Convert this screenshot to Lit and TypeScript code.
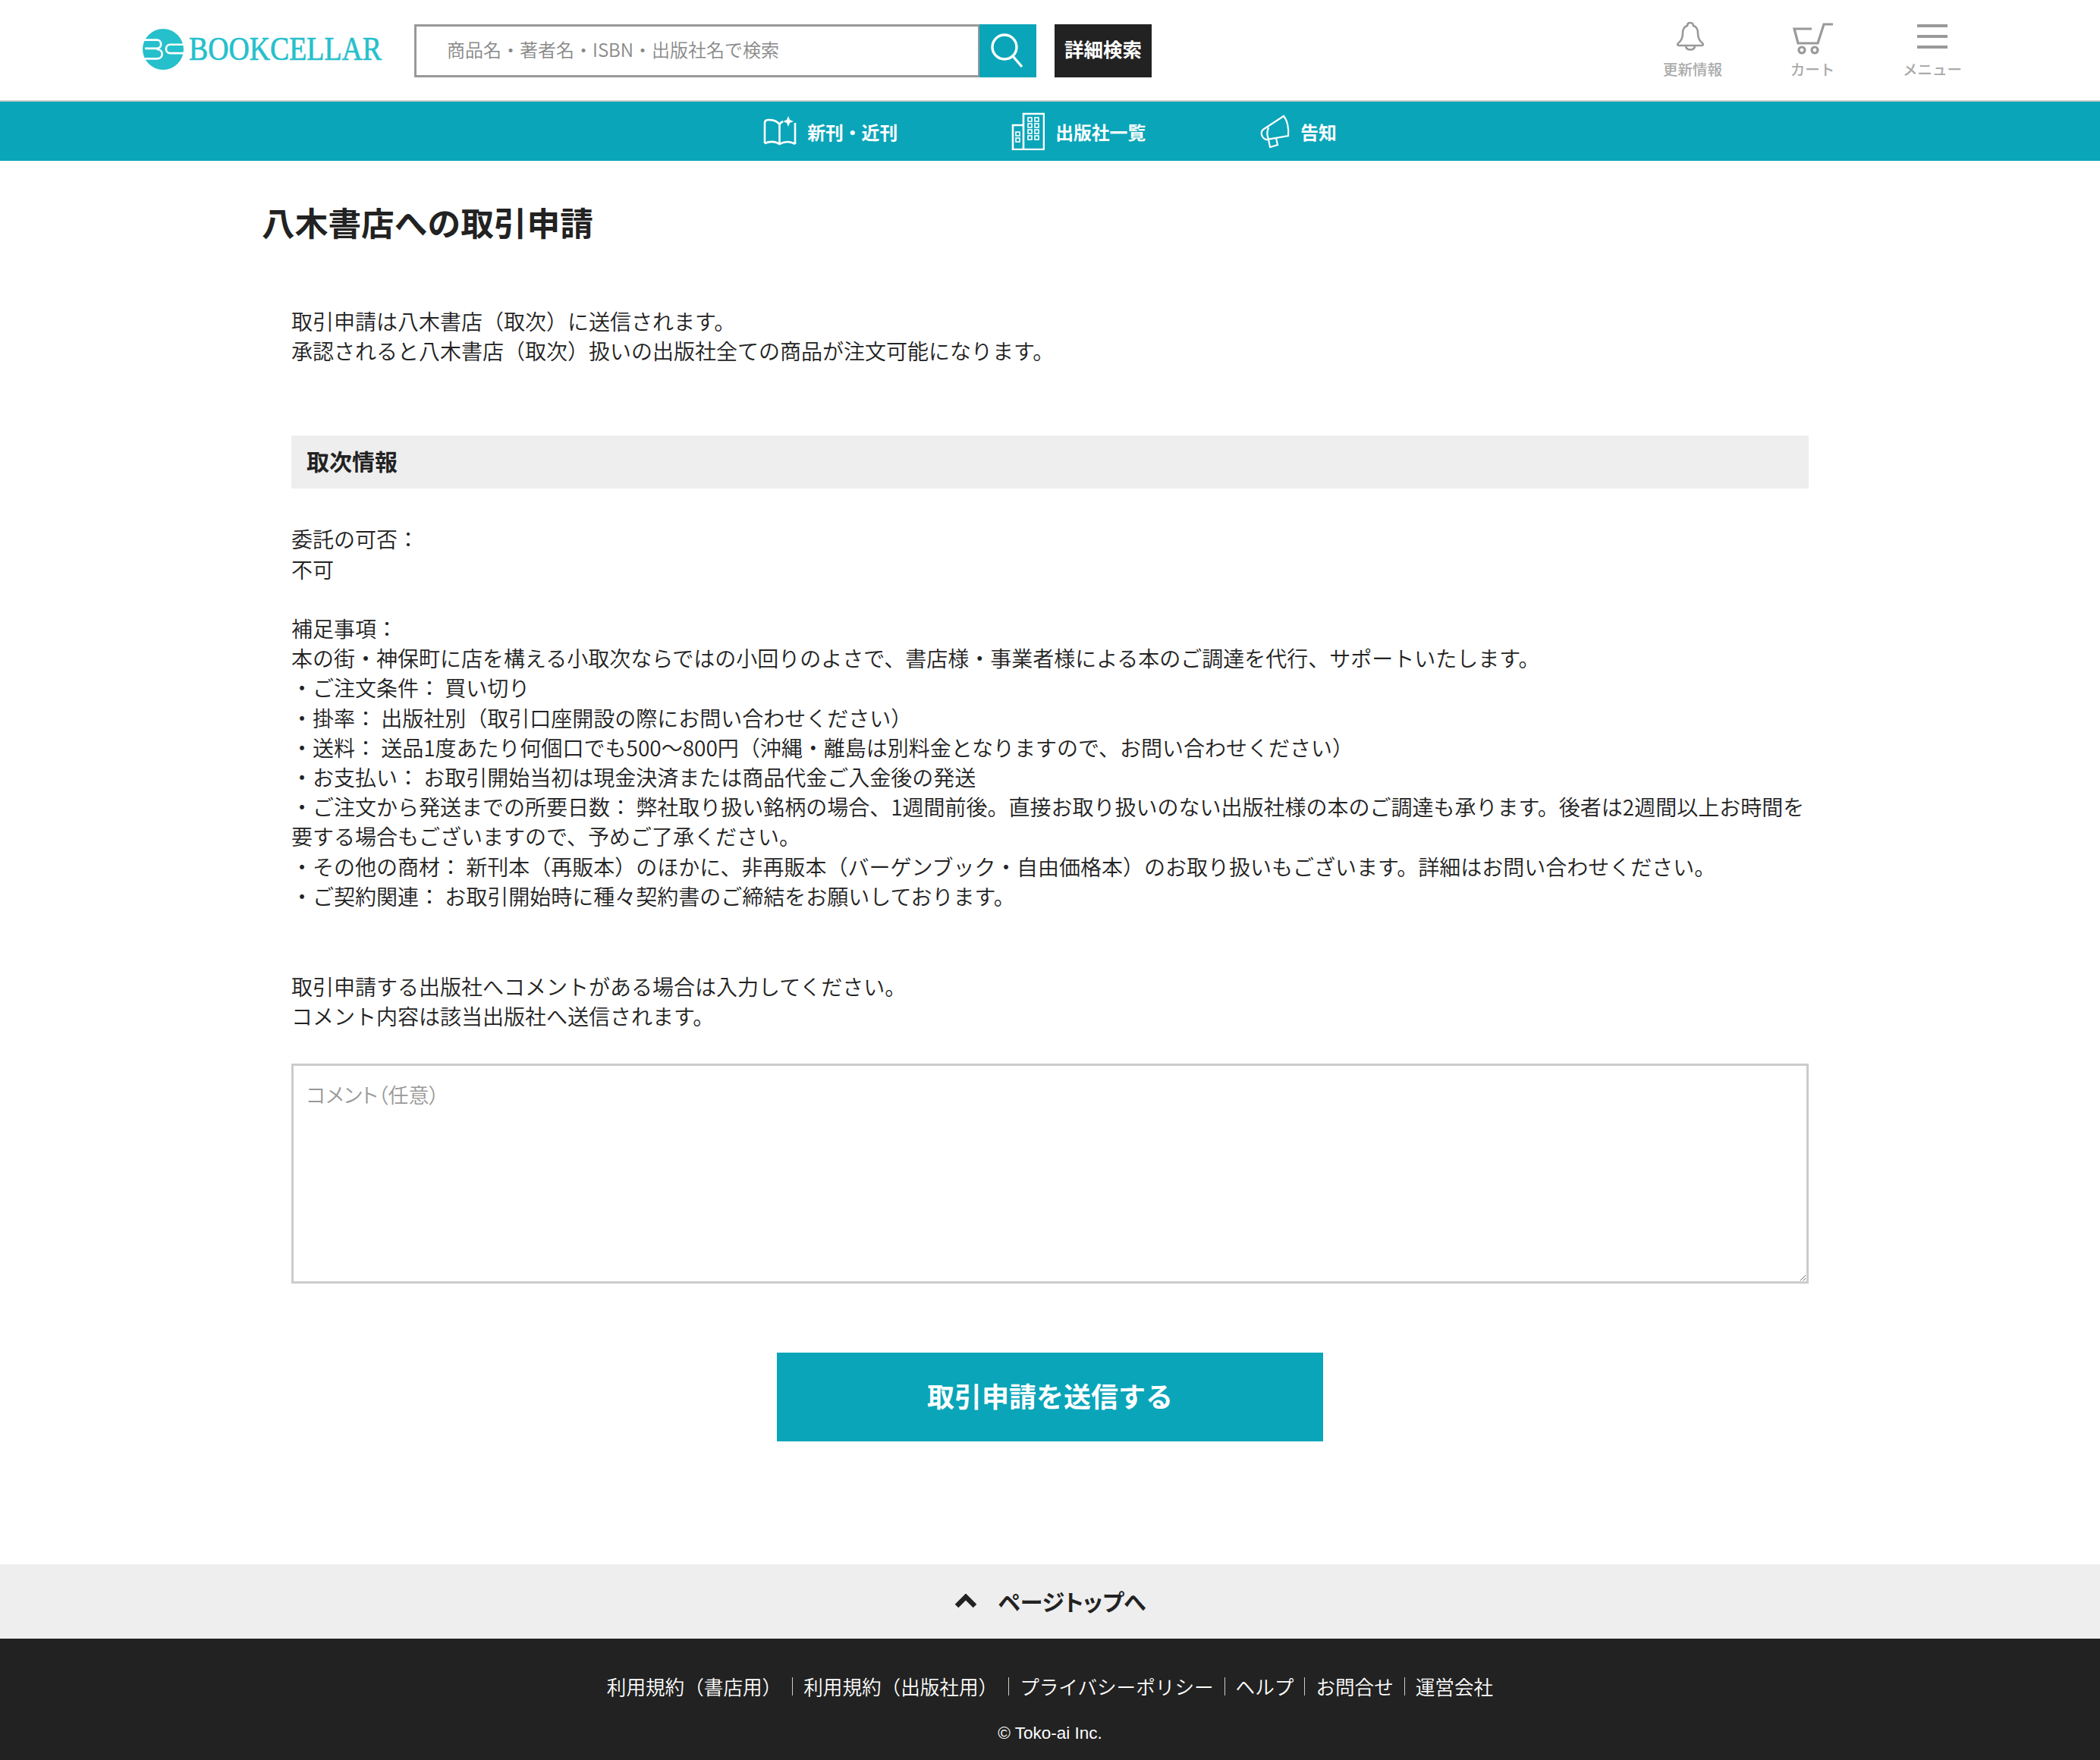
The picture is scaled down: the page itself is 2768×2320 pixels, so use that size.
import { LitElement, html, css, svg } from 'lit';
import { customElement } from 'lit/decorators.js';

const bodyLines = [
  '委託の可否：',
  '不可',
  '',
  '補足事項：',
  '本の街・神保町に店を構える小取次ならではの小回りのよさで、書店様・事業者様による本のご調達を代行、サポートいたします。',
  '・ご注文条件： 買い切り',
  '・掛率： 出版社別（取引口座開設の際にお問い合わせください）',
  '・送料： 送品1度あたり何個口でも500～800円（沖縄・離島は別料金となりますので、お問い合わせください）',
  '・お支払い： お取引開始当初は現金決済または商品代金ご入金後の発送',
  '・ご注文から発送までの所要日数： 弊社取り扱い銘柄の場合、1週間前後。直接お取り扱いのない出版社様の本のご調達も承ります。後者は2週間以上お時間を要する場合もございますので、予めご了承ください。',
  '・その他の商材： 新刊本（再販本）のほかに、非再販本（バーゲンブック・自由価格本）のお取り扱いもございます。詳細はお問い合わせください。',
  '・ご契約関連： お取引開始時に種々契約書のご締結をお願いしております。',
];

const footerLinks = ['利用規約（書店用）', '利用規約（出版社用）', 'プライバシーポリシー', 'ヘルプ', 'お問合せ', '運営会社'];

const windows = [
  [22, 7], [31, 7], [22, 15], [31, 15], [22, 23], [31, 23], [22, 31], [31, 31],
  [6, 26], [6, 34],
];

@customElement('app-root')
export class AppRoot extends LitElement {
  static styles = css`
    :host {
      display: block;
      font-family: "Noto Sans CJK JP", "Liberation Sans", sans-serif;
      color: #222;
      background: #fff;
    }
    a { color: inherit; text-decoration: none; }

    /* Header */
    .header {
      display: flex;
      align-items: flex-start;
      height: 134px;
      box-sizing: border-box;
      padding: 32px 142px 0 188px;
      border-bottom: 2px solid #ccc;
    }
    .logo {
      display: flex;
      width: 358px;
      margin-top: 6px;
      flex: none;
    }
    .logo-mark { width: 54px; height: 54px; flex: none; }
    .logo-text { width: 299px; height: 54px; flex: none; margin-left: 5px; }
    .logo-text text {
      font-family: "Liberation Serif", serif;
      font-size: 44px;
      fill: #25c0cc;
      stroke: #25c0cc;
      stroke-width: 0.7px;
    }
    .search { display: flex; height: 70px; }
    .search input {
      width: 745px;
      height: 70px;
      box-sizing: border-box;
      border: 3px solid #999;
      border-right-width: 2px;
      padding: 0 0 6px 40px;
      font: inherit;
      font-size: 24px;
      font-weight: 350;
      outline: none;
    }
    .search input::placeholder { color: #888; opacity: 1; }
    .search-btn {
      width: 75px;
      height: 70px;
      box-sizing: border-box;
      padding-right: 3px;
      background: #0aa5b9;
      display: flex;
      align-items: center;
      justify-content: center;
    }
    .detail-btn {
      width: 128px;
      height: 70px;
      box-sizing: border-box;
      padding-bottom: 7px;
      margin-left: 24px;
      background: #222;
      color: #fff;
      font-size: 25.5px;
      font-weight: 700;
      display: flex;
      align-items: center;
      justify-content: center;
    }
    .tools { display: flex; margin-left: auto; }
    .tool {
      width: 158px;
      height: 76px;
      display: flex;
      flex-direction: column;
      align-items: center;
      color: #aaa;
      font-size: 19.5px;
      font-weight: 500;
      line-height: 24px;
    }
    .tool svg { display: block; height: 48px; flex: none; margin-top: -4px; margin-bottom: 3px; }
    .tool .bell { margin-left: -6px; margin-top: -7px; margin-bottom: 6px; }
    .tool .cart { margin-left: 2px; }

    /* Nav */
    .nav {
      height: 78px;
      background: #0aa5b9;
      display: flex;
      align-items: center;
      justify-content: center;
      gap: 150px;
      color: #fff;
      font-size: 23.8px;
      font-weight: 700;
    }
    .nav a { display: flex; align-items: center; gap: 14px; }
    .nav svg { display: block; flex: none; }

    /* Main */
    .main { width: 2076px; margin: 0 auto; }
    h1 {
      margin: 50px 0 0 -1px;
      font-size: 43.7px;
      font-weight: 700;
      line-height: 60px;
    }
    .body { padding: 0 38px; font-size: 28px; font-weight: 350; line-height: 39.2px; }
    .intro { margin: 82px 0 0; }
    h2 {
      margin: 92px 0 0;
      height: 70px;
      padding-left: 20px;
      background: #eee;
      font-size: 30px;
      font-weight: 700;
      line-height: 66px;
    }
    .info { margin: 47px 0 0; }
    .info div { min-height: 39.2px; }
    .note { margin: 79.5px 0 0; }
    textarea {
      display: block;
      width: 100%;
      height: 290px;
      box-sizing: border-box;
      margin-top: 43px;
      padding: 18px 17px;
      border: 3px solid #ccc;
      font: inherit;
      font-size: 27px;
      line-height: 39px;
      font-feature-settings: "palt";
      outline: none;
    }
    textarea::placeholder { color: #999; opacity: 1; }
    .submit {
      width: 720px;
      height: 117px;
      box-sizing: border-box;
      padding-bottom: 4px;
      margin: 91px auto 0;
      background: #0aa5b9;
      color: #fff;
      font-size: 36px;
      font-weight: 700;
      display: flex;
      align-items: center;
      justify-content: center;
    }

    /* Footer */
    .to-top {
      margin-top: 162px;
      height: 98px;
      box-sizing: border-box;
      padding-bottom: 2px;
      background: #eee;
      display: flex;
      align-items: center;
      justify-content: center;
      gap: 28px;
      font-size: 30px;
      font-weight: 700;
      font-feature-settings: "palt";
    }
    .footer {
      height: 160px;
      background: #222;
      color: #fff;
      display: flex;
      flex-direction: column;
      align-items: center;
      font-size: 25.6px;
      font-weight: 350;
    }
    .links { display: flex; margin-top: 51px; }
    .links a {
      height: 24px;
      line-height: 24px;
      padding: 0 14px;
      border-right: 1px solid #ccc;
    }
    .links a:last-child { border-right: none; }
    .copy {
      margin-top: 36px;
      font-family: "Liberation Sans", sans-serif;
      font-size: 22.5px;
      font-weight: 400;
      line-height: 28px;
    }
  `;

  render() {
    return html`
      <header class="header">
        <a class="logo">
          <svg class="logo-mark" viewBox="9 9 52 52">
            <circle cx="35" cy="35" r="26" fill="#25c0cc"></circle>
            <g fill="none" stroke="#fff" stroke-width="2.6">
              <path d="M8 23H27C34 23 34 34 27 34H12M27 35C36 35 36 47 27 47H8"></path>
              <path d="M62 29H44C37 29 37 40 44 40H62"></path>
            </g>
          </svg>
          <svg class="logo-text" viewBox="0 0 299 54">
            <text x="2" y="41" textLength="254" lengthAdjust="spacingAndGlyphs">BOOKCELLAR</text>
          </svg>
        </a>
        <div class="search">
          <input type="text" placeholder="商品名・著者名・ISBN・出版社名で検索" />
          <a class="search-btn">
            <svg width="46" height="48" viewBox="0 0 46 48" fill="none" stroke="#fff" stroke-width="3.4">
              <circle cx="20" cy="19" r="16"></circle>
              <path d="M31 31L43 45"></path>
            </svg>
          </a>
        </div>
        <a class="detail-btn">詳細検索</a>
        <div class="tools">
          <a class="tool">
            <svg class="bell" width="38" viewBox="0 0 38 48" fill="none" stroke="#999" stroke-width="2.6">
              <path d="M19 5C16 5 15 7 15 9C11 10 9 14 9 19C9 25 7 29 3 32C1.500 33 2 35 4 35H34C36 35 36.500 33 35 32C31 29 29 25 29 19C29 14 27 10 23 9C23 7 22 5 19 5Z"></path>
              <path d="M13 36C14 42 24 42 25 36"></path>
            </svg>
            更新情報
          </a>
          <a class="tool">
            <svg class="cart" width="54" viewBox="0 0 54 48" fill="none" stroke="#999" stroke-width="3.2">
              <path d="M53 4H41L33 29H7L2 10H25"></path>
              <circle cx="12" cy="38" r="4"></circle>
              <circle cx="29" cy="38" r="4"></circle>
            </svg>
            カート
          </a>
          <a class="tool">
            <svg width="40" viewBox="0 0 40 48" fill="#999">
              <rect x="0" y="4" width="40" height="4"></rect>
              <rect x="0" y="18" width="40" height="4"></rect>
              <rect x="0" y="32" width="40" height="4"></rect>
            </svg>
            メニュー
          </a>
        </div>
      </header>

      <nav class="nav">
        <a>
          <svg width="44" height="40" viewBox="0 0 44 40" fill="none" stroke="#fff" stroke-width="2.6">
            <path d="M2 36V9C2 6 4 5 7 5C13 5 18 6 21.500 11V36"></path>
            <path d="M21.500 11C22.500 9 24 8 26 7"></path>
            <path d="M42 9V37"></path>
            <path d="M2 36C8 33 16 33 21.500 37C28 33 36 33 42 37"></path>
            <path d="M33 0L35 5L40 7L35 9L33 14L31 9L26 7L31 5Z" fill="#fff" stroke="none"></path>
          </svg>
          新刊・近刊
        </a>
        <a>
          <svg width="44" height="50" viewBox="0 0 44 50" fill="none" stroke="#fff" stroke-width="2.6">
            <path d="M16 2H43V49H2V17H16ZM16 17V49"></path>
            ${windows.map(([x, y]) => svg`<rect x=${x} y=${y} width="5" height="5" stroke-width="1.6"></rect>`)}
          </svg>
          出版社一覧
        </a>
        <a>
          <svg width="40" height="44" viewBox="0 0 40 44" fill="none" stroke="#fff" stroke-width="2.2">
            <path d="M32 2C37 8 39 19 38 28L9 33C3 31 0 23 6 19Z"></path>
            <path d="M12 17C10 22 10 28 12 32"></path>
            <path d="M12 33L14 43L24 40L22 31"></path>
          </svg>
          告知
        </a>
      </nav>

      <main class="main">
        <h1>八木書店への取引申請</h1>
        <div class="body">
          <p class="intro">取引申請は八木書店（取次）に送信されます。<br />承認されると八木書店（取次）扱いの出版社全ての商品が注文可能になります。</p>
          <h2>取次情報</h2>
          <div class="info">
            ${bodyLines.map((line) => html`<div>${line}</div>`)}
          </div>
          <p class="note">取引申請する出版社へコメントがある場合は入力してください。<br />コメント内容は該当出版社へ送信されます。</p>
          <textarea placeholder="コメント（任意）"></textarea>
          <a class="submit">取引申請を送信する</a>
        </div>
      </main>

      <a class="to-top">
        <svg width="30" height="18" viewBox="0 0 30 18" fill="none" stroke="#222" stroke-width="6.500">
          <path d="M3 16L15 4L27 16"></path>
        </svg>
        ページトップへ
      </a>
      <footer class="footer">
        <div class="links">
          ${footerLinks.map((label) => html`<a>${label}</a>`)}
        </div>
        <div class="copy">© Toko-ai Inc.</div>
      </footer>
    `;
  }
}
